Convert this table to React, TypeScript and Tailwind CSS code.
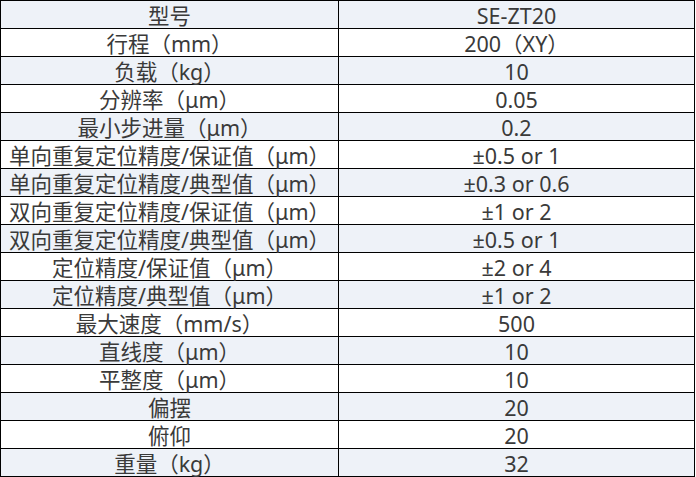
const rows: [string, string][] = [
  ['型号', 'SE-ZT20'],
  ['行程（mm）', '200（XY）'],
  ['负载（kg）', '10'],
  ['分辨率（μm）', '0.05'],
  ['最小步进量（μm）', '0.2'],
  ['单向重复定位精度/保证值（μm）', '±0.5 or 1'],
  ['单向重复定位精度/典型值（μm）', '±0.3 or 0.6'],
  ['双向重复定位精度/保证值（μm）', '±1 or 2'],
  ['双向重复定位精度/典型值（μm）', '±0.5 or 1'],
  ['定位精度/保证值（μm）', '±2 or 4'],
  ['定位精度/典型值（μm）', '±1 or 2'],
  ['最大速度（mm/s）', '500'],
  ['直线度（μm）', '10'],
  ['平整度（μm）', '10'],
  ['偏摆', '20'],
  ['俯仰', '20'],
  ['重量（kg）', '32'],
];

export default function App() {
  return (
    <div className="w-[696px] h-[477px] bg-white font-['Noto_Sans','Noto_Sans_CJK_SC',sans-serif] text-[21.5px] text-[#3a3a3a]">
      <table className="w-[695px] table-fixed border-collapse">
        <colgroup>
          <col className="w-[338px]" />
          <col />
        </colgroup>
        <tbody>
          {rows.map(([label, value], i) => (
            <tr key={i} className={i % 2 === 0 ? 'bg-[#eef2f8]' : 'bg-white'}>
              <td className="h-[28px] p-0 pt-[2px] border border-black text-center leading-[25px] whitespace-nowrap">
                {label}
              </td>
              <td className="h-[28px] p-0 pt-[2px] border border-black text-center leading-[25px] whitespace-nowrap">
                {value}
              </td>
            </tr>
          ))}
        </tbody>
      </table>
    </div>
  );
}
